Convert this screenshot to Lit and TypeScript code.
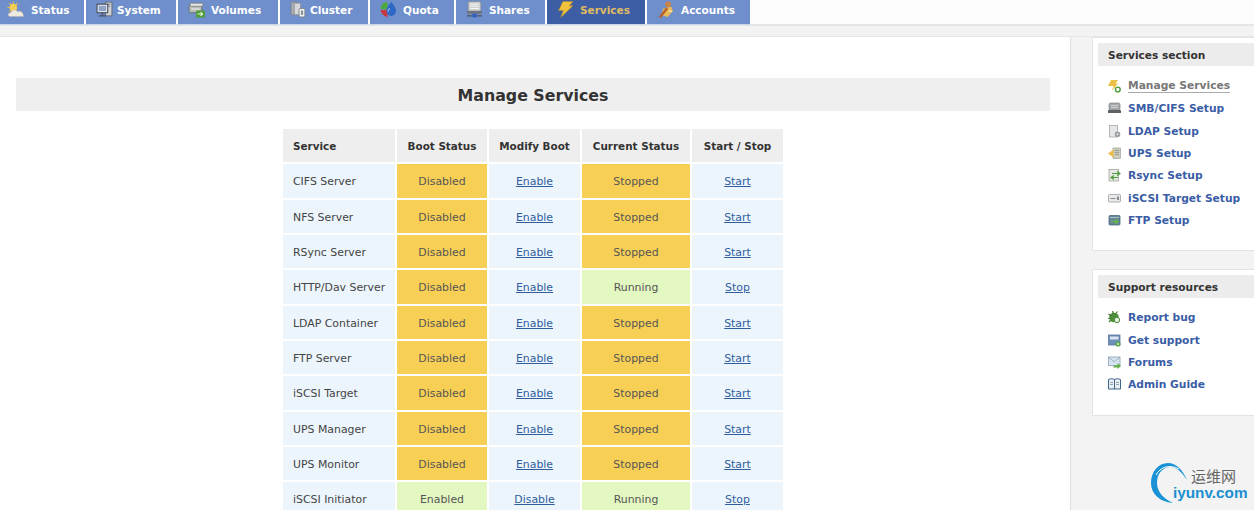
import { LitElement, html, css, svg } from "lit";
import { customElement } from "lit/decorators.js";

const tabIcons: Record<string, unknown> = {
  Status: svg`<circle cx="6" cy="6" r="3.500" fill="#f4cf55"/><path d="M6 .5v2M.5 6h2M2 2l1.500 1.500M10 2L8.500 3.500M2 10l1.500-1.500" stroke="#eebf3e"/><path d="M3 14.500c-2.500 0-2.500-3.500.5-3.500.5-2.500 4.500-3.500 6.500-1 2.500-1 5.500.5 5.500 4.500z" fill="#efeadf" stroke="#b9b3a4" stroke-width=".4"/>`,
  System: svg`<rect x="9" y="1" width="6" height="13" fill="#cfd2d6" stroke="#5d626c" stroke-width=".8"/><path d="M10.500 3h3M10.500 5h3" stroke="#6c717a" stroke-width=".8"/><rect x="1" y="3" width="10" height="8" fill="#eceef1" stroke="#474c58"/><rect x="2.500" y="4.500" width="7" height="5" fill="#8ea3c6"/><path d="M6 11v2M3 14h6" stroke="#474c58" stroke-width="1.300"/>`,
  Volumes: svg`<rect x="1" y="4" width="12" height="7" rx="1" fill="#b9bcb9" stroke="#5f6a68" stroke-width=".8"/><rect x="2" y="2" width="12" height="3" rx="1" fill="#e4e6e2" stroke="#6e7876" stroke-width=".7"/><path d="M3 7.500h8" stroke="#eee"/><rect x="7.500" y="9" width="8.500" height="6.500" rx="1.200" fill="#4e9c3a"/><path d="M9 12.200h4.500M11.800 10.500l2 1.700-2 1.700" stroke="#e6f5d8" fill="none"/>`,
  Cluster: svg`<rect x="1" y="1" width="5" height="12" fill="#aaaeb1" stroke="#7d8185" stroke-width=".7"/><rect x="4" y="2" width="6" height="11" fill="#d6d8da" stroke="#888c90" stroke-width=".7"/><rect x="8.500" y="7" width="5.500" height="8" rx=".8" fill="#eef0f1" stroke="#7a7f84" stroke-width=".8"/><rect x="10.300" y="9" width="2" height="4" fill="#858b90"/>`,
  Quota: svg`<path d="M8 1C4 1 1.500 4 1.500 7.500L8 8z" fill="#4ea83f"/><path d="M1.500 8.500C2 12 5 15 8 15V8.500z" fill="#c9383f"/><path d="M11.500 1C14 4 16 6.500 16 9.500a4.500 4.500 0 0 1-9 0C7 6.500 9 4 11.500 1z" fill="#2f67c6"/><path d="M10 7c-1 1-1.500 2-1.500 3" stroke="#a8c6f2" fill="none"/>`,
  Shares: svg`<rect x="2" y="0.500" width="12" height="9" rx="1.500" fill="#cfd1d3" stroke="#80848a" stroke-width=".7"/><path d="M4 3h8M4 5h8M4 7h8" stroke="#f5f5f5"/><rect x="1" y="9.500" width="14" height="2.500" fill="#6f737b"/><rect x="6" y="12" width="4" height="3.500" fill="#2f5fc0"/><path d="M1 14h5M10 14h5" stroke="#50545c"/>`,
  Services: svg`<path d="M5.500 .5h9.500l-3.500 4h3.500L3.500 15.500l2.500-6.500H1.500z" fill="#f0c33c" stroke="#b98a26" stroke-width=".5"/>`,
  Accounts: svg`<circle cx="10.500" cy="3.200" r="2.700" fill="#c98447"/><path d="M6 7l7.500-1.500 1.500 4-5 5.500-6-2z" fill="#e9bb55"/><path d="M1.500 15l7-9 2 1.500-7 8.500z" fill="#b85f30"/><path d="M11 9l3 1" stroke="#fff" stroke-width=".8"/>`,
};

const sideIcons: Record<string, unknown> = {
  "Manage Services": svg`<path d="M3 0h7L7.500 3.500H10L4 10.500l1.500-4.500H0z" fill="#ecc045"/><circle cx="9.800" cy="9.500" r="2.400" fill="#fff" stroke="#4f9a35" stroke-width="1.400"/>`,
  "SMB/CIFS Setup": svg`<rect x="1" y="1" width="11" height="7" rx="1.500" fill="#a7aaac" stroke="#7b7f82" stroke-width=".7"/><path d="M3 3.500h7M3 5.500h7" stroke="#d6d8d9" stroke-width=".8"/><rect x="0" y="8" width="13" height="3" rx=".5" fill="#5e6265"/>`,
  "LDAP Setup": svg`<rect x="1.500" y="0.500" width="8" height="11.500" fill="#e4e6e8" stroke="#a5a9ad" stroke-width=".8"/><circle cx="9.500" cy="9.200" r="2.800" fill="#9a9ea2"/><circle cx="9.500" cy="9.200" r="1" fill="#e4e6e8"/>`,
  "UPS Setup": svg`<rect x="5" y="1" width="7.500" height="10.500" fill="#c9cbbd" stroke="#a2a597" stroke-width=".7"/><path d="M7 3.500h4M7 5.500h4M7 7.500h4" stroke="#85887a" stroke-width=".7"/><path d="M0 6.500l5.500-4v8z" fill="#ecbe46"/>`,
  "Rsync Setup": svg`<rect x="1" y="0.500" width="9.500" height="11.500" fill="#e6e9e4" stroke="#a0a49f" stroke-width=".8"/><path d="M4 4.500h8M9 2.500l3 2-3 2M10 8.500H3M6 6.500l-3 2 3 2" stroke="#4d9a3a" fill="none" stroke-width="1.200"/>`,
  "iSCSI Target Setup": svg`<rect x="0.500" y="2.500" width="12" height="7.500" rx="1" fill="#e8eaec" stroke="#989ca1" stroke-width=".8"/><path d="M2.500 6.500h5" stroke="#85898e"/><rect x="9" y="4.500" width="2" height="3.500" fill="#85898e"/>`,
  "FTP Setup": svg`<rect x="1" y="1.500" width="11" height="9.500" rx="1" fill="#64859b" stroke="#4d6878" stroke-width=".8"/><path d="M2 3.500h9" stroke="#aebec9"/><path d="M3 7.500h7M7 5l3 2.500L7 10" stroke="#66b548" stroke-width="1.500" fill="none"/>`,
  "Report bug": svg`<ellipse cx="6" cy="6.500" rx="4.800" ry="4.800" fill="#4f8f3c"/><circle cx="9" cy="9" r="2.700" fill="#e9efe4" stroke="#4f8f3c"/><path d="M.5 3l3 2M4.500 0l1 3M9.500 .5L7.500 3M0 7.500h2M1 11l2-2" stroke="#3f7a2f" stroke-width="1.200"/>`,
  "Get support": svg`<rect x="0.500" y="1" width="11.500" height="10" fill="#6f8fb8" stroke="#5b77a0" stroke-width=".8"/><rect x="2" y="2.500" width="8.500" height="3" fill="#dbe4ef"/><circle cx="10" cy="10" r="2.600" fill="#5aa845"/><circle cx="10" cy="10" r=".9" fill="#eef7e8"/>`,
  Forums: svg`<rect x="0.500" y="1" width="11.500" height="8.500" fill="#d6e5f1" stroke="#8ba0b2" stroke-width=".8"/><path d="M.5 1l5.800 5 5.700-5" stroke="#8ba0b2" fill="none" stroke-width=".8"/><path d="M5.500 9.500h4V7l3.500 3-3.500 3v-1.500h-4z" fill="#63ad48"/>`,
  "Admin Guide": svg`<path d="M0.500 1.500c2-1 4-1 6 0 2-1 4-1 6 0v9.500h-12z" fill="#e8eff5" stroke="#3f6286"/><path d="M6.500 1.500v9.500" stroke="#3f6286"/><path d="M2 4.500h3M2 6.500h3M8 4.500h3M8 6.500h3" stroke="#7a90a5" stroke-width=".8"/>`,
};

const tabs: [string, number, number, number][] = [
  ["Status", 84, 7, 31], ["System", 90, 10, 31], ["Volumes", 100, 10, 33], ["Cluster", 88, 10, 30],
  ["Quota", 84, 9, 33], ["Shares", 89, 10, 33], ["Services", 98, 10, 33], ["Accounts", 103, 10, 34],
];

const D = "Disabled", E = "Enabled", S = "Stopped", R = "Running";
const rows: [string, string, string][] = [
  ["CIFS Server", D, S], ["NFS Server", D, S], ["RSync Server", D, S],
  ["HTTP/Dav Server", D, R], ["LDAP Container", D, S], ["FTP Server", D, S],
  ["iSCSI Target", D, S], ["UPS Manager", D, S], ["UPS Monitor", D, S],
  ["iSCSI Initiator", E, R],
];

const sections: [string, string[]][] = [
  ["Services section", ["Manage Services", "SMB/CIFS Setup", "LDAP Setup", "UPS Setup", "Rsync Setup", "iSCSI Target Setup", "FTP Setup"]],
  ["Support resources", ["Report bug", "Get support", "Forums", "Admin Guide"]],
];

@customElement("app-root")
export class AppRoot extends LitElement {
  static styles = css`
    :host {
      display: block;
      position: relative;
      width: 1254px;
      height: 510px;
      overflow: hidden;
      background: #f3f3f3;
      font-family: "DejaVu Sans", Verdana, sans-serif;
      font-size: 11px;
    }
    .nav {
      display: flex;
      height: 26px;
      box-sizing: border-box;
      gap: 2px;
      border-bottom: 2px solid #e6e6e6;
      background: #fdfdfd;
    }
    .tab {
      height: 25px;
      flex: none;
      display: flex;
      align-items: flex-start;
      box-sizing: border-box;
      background: #6f8fcc;
      border-bottom: 1px solid #c9d5ec;
      color: #fff;
      font-weight: 700;
      font-size: 10.500px;
      line-height: 20px;
    }
    .tab svg { width: 17px; height: 17px; flex: none; margin-top: 1px; }
    .tab.active { background: #3d5ea5; color: #e0bb62; }
    .strip {
      height: 11px;
      box-sizing: border-box;
      background: #f3f3f3;
      border-bottom: 1px solid #e6e6e6;
    }
    .body { display: flex; align-items: flex-start; }
    .main {
      width: 1071px;
      height: 480px;
      flex: none;
      box-sizing: border-box;
      background: #fff;
      border-right: 1px solid #e0e0e0;
      padding: 41px 20px 0 16px;
    }
    h1 {
      margin: 0 0 18px;
      height: 33px;
      width: 1034px;
      background: #efefef;
      color: #333;
      font-size: 15.800px;
      line-height: 35px;
      font-weight: 700;
      text-align: center;
    }
    .grid {
      margin-left: 267px;
      width: 500px;
      display: grid;
      grid-template-columns: 112px 90px 91px 108px 91px;
      grid-template-rows: 33.300px repeat(10, 33.330px);
      gap: 2px;
    }
    .cell {
      display: flex;
      align-items: center;
      justify-content: center;
      box-sizing: border-box;
      padding-top: 2px;
      background: #ecf5fc;
      color: #444;
      font-size: 10.900px;
    }
    .head { background: #eeeeee; color: #333; font-weight: 700; font-size: 10.400px; padding-top: 0; }
    .left { justify-content: flex-start; padding-left: 10px; }
    .off { background: #f8cf55; color: #555; }
    .on { background: #e3f7c1; color: #555; }
    a { color: #2f5d9e; text-decoration: underline; }
    .side {
      display: flex;
      flex-direction: column;
      gap: 18px;
      margin-left: 21px;
      width: 162px;
      flex: none;
    }
    .box {
      background: #fff;
      border: 1px solid #e4e4e4;
      border-right: 0;
      padding: 5px 0 0 5px;
    }
    .box h2 {
      margin: 0 0 9.400px;
      height: 23px;
      line-height: 24px;
      padding-left: 10px;
      background: #ececec;
      color: #333;
      font-size: 10.600px;
      font-weight: 700;
    }
    .box:last-child h2 { margin-bottom: 8.600px; }
    .box .links { display: flex; flex-direction: column; padding: 0 0 18.600px 10px; }
    .box:last-child .links { padding-bottom: 19.400px; }
    .link {
      display: flex;
      align-items: center;
      gap: 7px;
      height: 22.300px;
      color: #3a5da5;
      font-weight: 700;
      font-size: 10.700px;
      white-space: nowrap;
    }
    .link svg { width: 13px; height: 13px; flex: none; }
    .link.cur span { color: #777; border-bottom: 1px solid #aaa; line-height: 12px; }
    .mark {
      position: absolute;
      left: 1150px;
      top: 462px;
      width: 104px;
      height: 44px;
    }
    .mark svg { position: absolute; left: 0; top: 0; width: 40px; height: 44px; }
    .mark .cn {
      position: absolute;
      left: 41px;
      top: 5px;
      font-family: "Noto Sans CJK SC", sans-serif;
      font-size: 15px;
      line-height: 18px;
      color: #666;
    }
    .mark .en {
      position: absolute;
      left: 23px;
      top: 22px;
      font-family: "Liberation Sans", Arial, sans-serif;
      font-weight: 700;
      font-size: 15.300px;
      line-height: 17px;
      color: #1a8fd0;
    }
  `;

  render() {
    return html`
      <div class="nav">
        ${tabs.map(([name, w, il, tl]) => html`<div class="tab ${name === "Services" ? "active" : ""}" style="width:${w}px;padding-left:${il}px">
          <svg viewBox="0 0 16 16" style="margin-right:${tl - il - 17}px">${tabIcons[name]}</svg><span>${name}</span></div>`)}
      </div>
      <div class="strip"></div>
      <div class="body">
        <div class="main">
          <h1>Manage Services</h1>
          <div class="grid">
            <div class="cell head left">Service</div>
            <div class="cell head">Boot Status</div>
            <div class="cell head">Modify Boot</div>
            <div class="cell head">Current Status</div>
            <div class="cell head">Start / Stop</div>
            ${rows.map(([n, b, c]) => html`
              <div class="cell left">${n}</div>
              <div class="cell ${b === D ? "off" : "on"}">${b}</div>
              <div class="cell"><a>${b === D ? "Enable" : "Disable"}</a></div>
              <div class="cell ${c === S ? "off" : "on"}">${c}</div>
              <div class="cell"><a>${c === S ? "Start" : "Stop"}</a></div>`)}
          </div>
        </div>
        <div class="side">
          ${sections.map(([t, items]) => html`<div class="box">
            <h2>${t}</h2>
            <div class="links">
              ${items.map((i) => html`<div class="link ${i === "Manage Services" ? "cur" : ""}">
                <svg viewBox="0 0 13 13">${sideIcons[i]}</svg><span>${i}</span></div>`)}
            </div>
          </div>`)}
        </div>
      </div>
      <div class="mark">
        <svg viewBox="0 0 40 44">
          <path d="M37 18C33 8 26 1 18 1 8 1 1 10 1 21c0 11 9 19 22 20C14 37 7 30 7 21 7 12 12 6 19 5c7-1 13 5 18 13z" fill="#1a93d6"/>
          <path d="M6 13C10 5 20 2 29 7" stroke="#fff" stroke-width="1" fill="none"/>
        </svg>
        <span class="cn">运维网</span>
        <span class="en">iyunv.com</span>
      </div>
    `;
  }
}
